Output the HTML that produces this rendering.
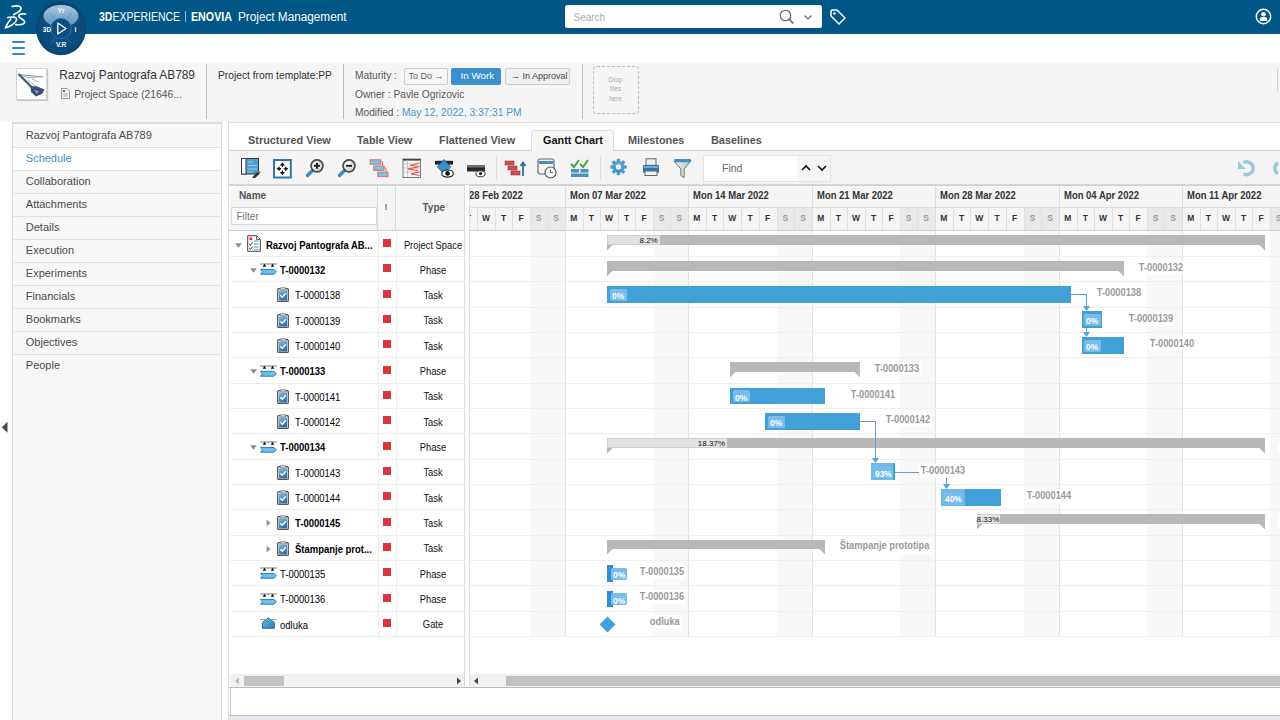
<!DOCTYPE html><html><head><meta charset="utf-8"><style>
*{margin:0;padding:0;box-sizing:border-box}
html,body{width:1280px;height:720px;overflow:hidden;background:#fff;font-family:"Liberation Sans", sans-serif;color:#333}
.ab{position:absolute}
.t{position:absolute;white-space:nowrap;line-height:1}
</style></head><body>
<div class="ab" style="left:0px;top:0px;width:1280px;height:34px;background:#005686"></div>
<svg class="ab" style="left:0px;top:0px" width="34" height="34" viewBox="0 0 34 34">
<g fill="none" stroke="#fff" stroke-linecap="round" stroke-linejoin="round">
<path d="M12.3 6.3 C16 5.6 21.3 5.4 21 8.6 C20.6 11 17 13 13.8 14.6" stroke-width="1.7"/>
<path d="M7.8 17.5 C11 16.9 17.2 16.4 16.6 19.6 C16 23 10.5 26.5 5.3 27.9 C6.8 24.5 8.8 21.2 10.8 18.9" stroke-width="1.6"/>
<path d="M25.6 14 C22 13.5 18.3 14 18.9 16.6 C19.5 18.6 25.2 19.4 24.6 22.4 C24.1 24.7 19 24.9 15.8 24.6" stroke-width="1.7"/>
</g></svg>
<svg class="ab" style="left:34px;top:0px" width="54" height="57" viewBox="0 0 54 57">
<defs>
<radialGradient id="cg" cx="50%" cy="45%" r="55%"><stop offset="0" stop-color="#0d5488"/><stop offset="1" stop-color="#0a4a79"/></radialGradient>
<linearGradient id="tg" x1="0" y1="0" x2="0" y2="1"><stop offset="0" stop-color="#a9c8e0"/><stop offset="1" stop-color="#5b8fbb"/></linearGradient>
</defs>
<ellipse cx="27" cy="28.3" rx="25" ry="27" fill="#0a4570"/>
<circle cx="27" cy="28.5" r="24" fill="url(#cg)"/>
<ellipse cx="27" cy="16" rx="17.5" ry="11" fill="url(#tg)"/>
<circle cx="27" cy="28.5" r="10.2" fill="#0b4d80"/>
<circle cx="27" cy="28.5" r="10.2" fill="none" stroke="#2a84bf" stroke-width="0.7"/>
<path d="M23.8 23 L32 28.5 L23.8 34 Z" fill="none" stroke="#fff" stroke-width="1.3" stroke-linejoin="round"/>
<g stroke="#3a8cc4" stroke-width="0.6"><line x1="16" y1="13" x2="21" y2="18"/><line x1="38" y1="13" x2="33" y2="18"/><line x1="16.5" y1="43" x2="21" y2="39"/><line x1="37.5" y1="43" x2="33" y2="39"/></g>
<text x="27" y="13" fill="#fff" font-family="Liberation Sans" font-weight="bold" font-size="6.5" text-anchor="middle">Yr</text>
<text x="13" y="31.5" fill="#fff" font-family="Liberation Sans" font-weight="bold" font-size="6.5" text-anchor="middle">3D</text>
<text x="41.5" y="31.5" fill="#fff" font-family="Liberation Sans" font-weight="bold" font-size="7" text-anchor="middle">i</text>
<text x="27" y="46.5" fill="#fff" font-family="Liberation Sans" font-weight="bold" font-size="6.5" text-anchor="middle">V.R</text>
</svg>
<div class="t" style="left:99px;top:10.64px;font-size:12px;color:#fff;transform:scaleX(0.874);transform-origin:0 0"><b>3D</b>EXPERIENCE</div>
<div class="ab" style="left:185px;top:11px;width:1px;height:11px;background:#8fb8da"></div>
<div class="t" style="left:190.5px;top:10.64px;font-size:12px;color:#fff;transform:scaleX(0.89);transform-origin:0 0"><b>ENOVIA</b></div>
<div class="t" style="left:238.2px;top:10.64px;font-size:12px;color:#fff;transform:scaleX(0.98);transform-origin:0 0">Project Management</div>
<div class="ab" style="left:565px;top:5.4px;width:257px;height:22.8px;background:#fff;border-radius:2.5px"></div>
<div class="t" style="left:573.5px;top:12.54px;font-size:10px;color:#aaa">Search</div>
<svg class="ab" style="left:778px;top:8px" width="18" height="18" viewBox="0 0 18 18"><circle cx="7.5" cy="7.5" r="5.2" fill="none" stroke="#6a6a6a" stroke-width="1.3"/><line x1="11.2" y1="11.2" x2="14.8" y2="14.8" stroke="#6a6a6a" stroke-width="1.7" stroke-linecap="round"/></svg>
<svg class="ab" style="left:802px;top:12px" width="12" height="10" viewBox="0 0 12 10"><path d="M2.5 3.5 L6 7 L9.5 3.5" fill="none" stroke="#6a6a6a" stroke-width="1.2"/></svg>
<svg class="ab" style="left:829px;top:8px" width="18" height="18" viewBox="0 0 18 18"><path d="M2 3 L2 8 L10 16 L16 10 L8 2 L3 2 Z" fill="none" stroke="#fff" stroke-width="1.5" stroke-linejoin="round"/><circle cx="5.5" cy="5.5" r="1.3" fill="#fff"/></svg>
<svg class="ab" style="left:1255px;top:8px" width="17" height="17" viewBox="0 0 17 17"><circle cx="8.5" cy="8.5" r="7.2" fill="none" stroke="#fff" stroke-width="1.4"/><circle cx="8.5" cy="6.2" r="2.3" fill="#fff"/><path d="M4.8 13 V11 C4.8 9.6 5.8 9.1 8.5 9.1 C11.2 9.1 12.2 9.6 12.2 11 V13 Z" fill="#fff"/></svg>
<div class="ab" style="left:12px;top:41px;width:13px;height:2px;background:#2f86cf;border-radius:1px"></div>
<div class="ab" style="left:12px;top:47px;width:13px;height:2px;background:#2f86cf;border-radius:1px"></div>
<div class="ab" style="left:12px;top:53px;width:13px;height:2px;background:#2f86cf;border-radius:1px"></div>
<div class="ab" style="left:0px;top:62px;width:1280px;height:60px;background:#f5f5f5"></div>
<div class="ab" style="left:15.5px;top:67.5px;width:31px;height:32px;background:#fff;border:1px solid #d4d4d4;box-shadow:1px 1px 1px #c8c8c8"></div>
<svg class="ab" style="left:16px;top:68px" width="31" height="31" viewBox="0 0 31 31"><g fill="none" stroke-linecap="round"><path d="M3 6.5 L27 9" stroke="#8a93a8" stroke-width="1"/><path d="M3.5 6.5 L12 10 L25 8.5" stroke="#9aa0b0" stroke-width="0.9"/><path d="M3 6.5 L17.5 21" stroke="#46577a" stroke-width="2.2"/><path d="M12 12 L19 18 M16 11 L22 14" stroke="#a39aa6" stroke-width="0.9"/></g><path d="M14.5 19 L20 18 L28.5 21.5 L26 26 L20 28.5 L15 24 Z" fill="#3d4c74"/><path d="M18 22 L23 23 L21 26 Z" fill="#8fa0c8"/></svg>
<div class="t" style="left:59.3px;top:69.97px;font-size:11.85px;color:#333">Razvoj Pantografa AB789</div>
<svg class="ab" style="left:61px;top:88px" width="9" height="11" viewBox="0 0 9 11"><path d="M0.5 0.5 H6 L8.5 3 V10.5 H0.5 Z" fill="#f4f4f4" stroke="#999" stroke-width="1"/><rect x="2" y="2" width="2" height="2" fill="#d33"/><line x1="2" y1="6" x2="7" y2="6" stroke="#7ab" stroke-width="0.8"/><line x1="2" y1="8" x2="7" y2="8" stroke="#7ab" stroke-width="0.8"/></svg>
<div class="t" style="left:74.2px;top:90.28px;font-size:10.3px;color:#555">Project Space (21646...</div>
<div class="ab" style="left:206px;top:64px;width:1px;height:55px;background:#bbb"></div>
<div class="t" style="left:218px;top:70.82px;font-size:10.25px;color:#333">Project from template:PP</div>
<div class="ab" style="left:342.5px;top:64px;width:1px;height:55px;background:#bbb"></div>
<div class="t" style="left:355px;top:70.67px;font-size:10.2px;color:#555">Maturity :</div>
<div class="ab" style="left:403.5px;top:67.5px;width:44px;height:17px;background:#f5f5f5;border:1px solid #ccc;border-radius:2px"></div>
<div class="t" style="left:408.5px;top:71.88px;font-size:9px;color:#666">To Do &#8594;</div>
<div class="ab" style="left:451px;top:67.5px;width:50px;height:17.5px;background:#3a8fcc;border-radius:2px"></div>
<div class="t" style="left:460.5px;top:70.70px;font-size:9.8px;color:#fff">In Work</div>
<div class="ab" style="left:505px;top:67.5px;width:65px;height:17px;background:#f0f0f0;border:1px solid #ccc;border-radius:2px"></div>
<div class="t" style="left:511px;top:71.88px;font-size:9px;color:#444">&#8594; In Approval</div>
<div class="t" style="left:355px;top:89.77px;font-size:10.2px;color:#555">Owner : Pavle Ogrizovic</div>
<div class="t" style="left:355px;top:107.57px;font-size:10.2px;color:#555">Modified : <span style="color:#4a95d0">May 12, 2022, 3:37:31 PM</span></div>
<div class="ab" style="left:581.5px;top:64px;width:1px;height:55px;background:#bbb"></div>
<div class="ab" style="left:593px;top:66px;width:45.5px;height:47.5px;border:1px dashed #bbb;border-radius:4px"></div>
<div class="ab" style="left:593px;top:75px;width:45px;text-align:center;font-size:6.5px;line-height:9.3px;color:#aaa">Drop<br>files<br>here</div>
<div class="ab" style="left:1277px;top:69px;width:1px;height:22px;background:#ccc"></div>
<div class="ab" style="left:12px;top:122px;width:210px;height:598px;background:#f7f7f7;border-left:1px solid #ddd;border-right:1px solid #ddd;border-top:2px solid #ddd"></div>
<div class="t" style="left:25.8px;top:129.99px;font-size:11px;color:#4a4a4a">Razvoj Pantografa AB789</div>
<div class="ab" style="left:13px;top:146.55px;width:208px;height:23px;background:#fff"></div>
<div class="t" style="left:25.8px;top:153.04px;font-size:11px;color:#3d8fd1">Schedule</div>
<div class="t" style="left:25.8px;top:176.09px;font-size:11px;color:#4a4a4a">Collaboration</div>
<div class="t" style="left:25.8px;top:199.14px;font-size:11px;color:#4a4a4a">Attachments</div>
<div class="t" style="left:25.8px;top:222.19px;font-size:11px;color:#4a4a4a">Details</div>
<div class="t" style="left:25.8px;top:245.24px;font-size:11px;color:#4a4a4a">Execution</div>
<div class="t" style="left:25.8px;top:268.29px;font-size:11px;color:#4a4a4a">Experiments</div>
<div class="t" style="left:25.8px;top:291.34px;font-size:11px;color:#4a4a4a">Financials</div>
<div class="t" style="left:25.8px;top:314.39px;font-size:11px;color:#4a4a4a">Bookmarks</div>
<div class="t" style="left:25.8px;top:337.44px;font-size:11px;color:#4a4a4a">Objectives</div>
<div class="t" style="left:25.8px;top:360.49px;font-size:11px;color:#4a4a4a">People</div>
<div class="ab" style="left:13px;top:146.5px;width:208px;height:1px;background:#e0e0e0"></div>
<div class="ab" style="left:13px;top:169.55px;width:208px;height:1px;background:#e0e0e0"></div>
<div class="ab" style="left:13px;top:192.6px;width:208px;height:1px;background:#e0e0e0"></div>
<div class="ab" style="left:13px;top:215.65px;width:208px;height:1px;background:#e0e0e0"></div>
<div class="ab" style="left:13px;top:238.7px;width:208px;height:1px;background:#e0e0e0"></div>
<div class="ab" style="left:13px;top:261.75px;width:208px;height:1px;background:#e0e0e0"></div>
<div class="ab" style="left:13px;top:284.8px;width:208px;height:1px;background:#e0e0e0"></div>
<div class="ab" style="left:13px;top:307.85px;width:208px;height:1px;background:#e0e0e0"></div>
<div class="ab" style="left:13px;top:330.9px;width:208px;height:1px;background:#e0e0e0"></div>
<div class="ab" style="left:13px;top:353.95000000000005px;width:208px;height:1px;background:#e0e0e0"></div>
<svg class="ab" style="left:1px;top:421px" width="8" height="13" viewBox="0 0 8 13"><path d="M6.5 0.8 L0.8 6.3 L6.5 11.8 Z" fill="#4a4a4a"/></svg>
<div class="ab" style="left:228px;top:122px;width:1052px;height:598px;background:#fff;border-left:1px solid #ddd;border-top:1px solid #ddd"></div>
<div class="ab" style="left:229px;top:150px;width:1051px;height:2px;background:#d2d2d2"></div>
<div class="ab" style="left:531px;top:130px;width:82.5px;height:21px;background:#f6f6f6;border:1px solid #ddd;border-bottom:none;border-radius:2px 2px 0 0"></div>
<div class="t" style="left:247.6px;top:134.18px;font-size:11.6px;font-weight:bold;color:#555;transform:scaleX(0.94);transform-origin:0 0">Structured View</div>
<div class="t" style="left:357px;top:134.18px;font-size:11.6px;font-weight:bold;color:#555;transform:scaleX(0.94);transform-origin:0 0">Table View</div>
<div class="t" style="left:438.7px;top:134.18px;font-size:11.6px;font-weight:bold;color:#555;transform:scaleX(0.94);transform-origin:0 0">Flattened View</div>
<div class="t" style="left:542.75px;top:134.18px;font-size:11.6px;font-weight:bold;color:#111;transform:scaleX(0.94);transform-origin:0 0">Gantt Chart</div>
<div class="t" style="left:627.7px;top:134.18px;font-size:11.6px;font-weight:bold;color:#555;transform:scaleX(0.94);transform-origin:0 0">Milestones</div>
<div class="t" style="left:711.2px;top:134.18px;font-size:11.6px;font-weight:bold;color:#555;transform:scaleX(0.94);transform-origin:0 0">Baselines</div>
<div class="ab" style="left:229px;top:151px;width:1051px;height:33.5px;background:#f4f4f4"></div>
<div class="ab" style="left:229px;top:184px;width:1051px;height:1px;background:#d6d6d6"></div>
<svg class="ab" style="left:241px;top:158px" width="20" height="20" viewBox="0 0 20 20"><rect x="0.5" y="0.5" width="17" height="15.5" fill="#4d9fcf" stroke="#3a3a3a" stroke-width="1"/><rect x="0.5" y="0.5" width="4.5" height="15.5" fill="#fff" stroke="#3a3a3a" stroke-width="1"/><g stroke="#9dd2ee" stroke-width="0.9"><line x1="6.5" y1="4" x2="12" y2="4"/><line x1="6.5" y1="7.5" x2="16" y2="7.5"/><line x1="6.5" y1="11" x2="16" y2="11"/><line x1="6.5" y1="14" x2="12" y2="14"/></g><path d="M11 19.5 L16.5 14 L18.5 16 L13 21 Z" fill="#333"/><path d="M16.5 14 L18 12.5 L19.8 14.3 L18.5 16 Z" fill="#777"/></svg>
<svg class="ab" style="left:273px;top:158.5px" width="19" height="20" viewBox="0 0 19 20"><rect x="1" y="1" width="16.8" height="17.5" fill="#fff" stroke="#2f77a8" stroke-width="2"/><g fill="#111"><path d="M9.4 3.6 L12 6.6 L6.8 6.6 Z"/><path d="M9.4 15.9 L12 12.9 L6.8 12.9 Z"/><path d="M3.6 9.75 L6.6 7.2 L6.6 12.3 Z"/><path d="M15.2 9.75 L12.2 7.2 L12.2 12.3 Z"/></g><g stroke="#111" stroke-width="1.3"><line x1="9.4" y1="6" x2="9.4" y2="8"/><line x1="9.4" y1="11.5" x2="9.4" y2="13.5"/><line x1="6" y1="9.75" x2="8" y2="9.75"/><line x1="10.8" y1="9.75" x2="12.8" y2="9.75"/></g></svg>
<svg class="ab" style="left:305px;top:158px" width="20" height="20" viewBox="0 0 20 20"><defs><radialGradient id="lg" cx="40%" cy="35%" r="70%"><stop offset="0" stop-color="#fff"/><stop offset="1" stop-color="#c9c9c9"/></radialGradient></defs><path d="M8 12 L2.5 17.5" stroke="#3d86b8" stroke-width="3.2" stroke-linecap="round"/><circle cx="12" cy="7.8" r="6" fill="url(#lg)" stroke="#4b4b4b" stroke-width="1.7"/><path d="M12 4.8 V10.8 M9 7.8 H15" stroke="#222" stroke-width="2"/></svg>
<svg class="ab" style="left:337px;top:158px" width="20" height="20" viewBox="0 0 20 20"><path d="M8 12 L2.5 17.5" stroke="#3d86b8" stroke-width="3.2" stroke-linecap="round"/><circle cx="12" cy="7.8" r="6" fill="url(#lg)" stroke="#4b4b4b" stroke-width="1.7"/><path d="M9 7.8 H15" stroke="#222" stroke-width="2"/></svg>
<svg class="ab" style="left:369px;top:158px" width="21" height="20" viewBox="0 0 21 20"><g fill="#74c6f0" stroke="#e0776a" stroke-width="1.1"><rect x="1.2" y="1.8" width="10.3" height="4.4"/><rect x="4.7" y="8" width="10.3" height="4.4"/><rect x="8.7" y="14.2" width="10.3" height="4.4"/></g><path d="M11.5 3.5 H13.5 V8 M15 10 H17 V14.2" fill="none" stroke="#e0776a" stroke-width="1"/></svg>
<svg class="ab" style="left:402px;top:158px" width="20" height="21" viewBox="0 0 20 21"><rect x="1" y="1" width="17.5" height="18.5" fill="#f6f6f6" stroke="#777" stroke-width="1"/><rect x="1" y="1" width="17.5" height="1.6" fill="#444"/><g stroke="#bbb" stroke-width="0.8"><line x1="1" y1="6" x2="18.5" y2="6"/><line x1="1" y1="10" x2="18.5" y2="10"/><line x1="1" y1="14" x2="18.5" y2="14"/><line x1="5.5" y1="2" x2="5.5" y2="19"/></g><g fill="none" stroke="#f03a2a" stroke-width="0.9"><path d="M17.5 5 L8 7.5 L17.5 8.5"/><path d="M16 9 L6 11 L16 12.5"/><path d="M17.5 14 L9 16 L17.5 17.5"/></g></svg>
<svg class="ab" style="left:434px;top:158px" width="20" height="21" viewBox="0 0 20 21"><rect x="1" y="2.8" width="18" height="3.8" fill="#222"/><path d="M10 1.5 L16.8 8.8 L10 16 L3.2 8.8 Z" fill="#3a90c8" stroke="#23628f" stroke-width="0.8"/><ellipse cx="13.6" cy="15.6" rx="5.8" ry="3.6" fill="#fff" stroke="#222" stroke-width="1.2"/><circle cx="13.6" cy="15.4" r="2.3" fill="#111"/></svg>
<svg class="ab" style="left:466px;top:158px" width="20" height="21" viewBox="0 0 20 21"><rect x="1" y="7" width="18" height="6.5" fill="#2a2a2a"/><rect x="1" y="7" width="18" height="2.5" fill="#707070"/><ellipse cx="14.5" cy="15.8" rx="4.6" ry="3" fill="#fff" stroke="#333" stroke-width="1"/><circle cx="14.5" cy="15.6" r="1.6" fill="#222"/></svg>
<div class="ab" style="left:495.5px;top:156px;width:1px;height:24px;background:#ddd"></div>
<svg class="ab" style="left:504px;top:158px" width="22" height="20" viewBox="0 0 22 20"><g fill="#d64a55" stroke="#7a2a30" stroke-width="0.5"><rect x="1" y="3" width="9" height="4"/><rect x="4" y="8" width="9" height="4"/><rect x="7" y="13" width="9" height="4"/></g><path d="M19 18 V5 M16.5 8 L19 4.5 L21.5 8" fill="none" stroke="#2d6ea3" stroke-width="1.8"/></svg>
<svg class="ab" style="left:537px;top:158px" width="20" height="21" viewBox="0 0 20 21"><rect x="1" y="1" width="16" height="15" rx="2" fill="#f4f4f4" stroke="#666" stroke-width="1.2"/><rect x="2" y="3" width="14" height="3" fill="#4a8fc0"/><circle cx="13.5" cy="14.5" r="5.5" fill="#fff" stroke="#555" stroke-width="1.2"/><path d="M13.5 11.5 V14.5 H16" fill="none" stroke="#555" stroke-width="1"/></svg>
<svg class="ab" style="left:570px;top:158px" width="20" height="20" viewBox="0 0 20 20"><path d="M1 6 L4 9 L9 2 M10 6 L13 9 L18 2" fill="none" stroke="#3aa83a" stroke-width="2"/><rect x="1" y="11" width="8" height="3.5" fill="#4a8fc0"/><rect x="10.5" y="11" width="8" height="3.5" fill="#4a8fc0"/><rect x="1" y="15.5" width="17.5" height="3.5" fill="#4a8fc0"/></svg>
<div class="ab" style="left:599.5px;top:156px;width:1px;height:24px;background:#ddd"></div>
<svg class="ab" style="left:610px;top:158px" width="17" height="18" viewBox="0 0 17 18"><defs><linearGradient id="gr" x1="0" y1="0" x2="0" y2="1"><stop offset="0" stop-color="#6fb3e0"/><stop offset="1" stop-color="#3a86bd"/></linearGradient></defs><g transform="translate(8.5,9)"><circle r="6" fill="url(#gr)"/><rect x="-1.7" y="-8.2" width="3.4" height="3.8" rx="0.6" fill="#4e9acd" transform="rotate(0)"/><rect x="-1.7" y="-8.2" width="3.4" height="3.8" rx="0.6" fill="#4e9acd" transform="rotate(45)"/><rect x="-1.7" y="-8.2" width="3.4" height="3.8" rx="0.6" fill="#4e9acd" transform="rotate(90)"/><rect x="-1.7" y="-8.2" width="3.4" height="3.8" rx="0.6" fill="#4e9acd" transform="rotate(135)"/><rect x="-1.7" y="-8.2" width="3.4" height="3.8" rx="0.6" fill="#4e9acd" transform="rotate(180)"/><rect x="-1.7" y="-8.2" width="3.4" height="3.8" rx="0.6" fill="#4e9acd" transform="rotate(225)"/><rect x="-1.7" y="-8.2" width="3.4" height="3.8" rx="0.6" fill="#4e9acd" transform="rotate(270)"/><rect x="-1.7" y="-8.2" width="3.4" height="3.8" rx="0.6" fill="#4e9acd" transform="rotate(315)"/><circle r="2.7" fill="#f4f4f4"/></g></svg>
<svg class="ab" style="left:642px;top:158px" width="18" height="20" viewBox="0 0 18 20"><rect x="4" y="0.8" width="10" height="6.5" fill="#f2f2f2" stroke="#666" stroke-width="1"/><rect x="1" y="7" width="16" height="8" rx="1.2" fill="#2f78ab"/><rect x="2" y="8" width="14" height="2" fill="#65aedb"/><rect x="3" y="13" width="12" height="4.5" fill="#f2f2f2" stroke="#666" stroke-width="1"/></svg>
<svg class="ab" style="left:673px;top:158px" width="19" height="21" viewBox="0 0 19 21"><defs><linearGradient id="fg" x1="0" y1="0" x2="1" y2="0"><stop offset="0" stop-color="#f4f4f4"/><stop offset="1" stop-color="#bcbcbc"/></linearGradient></defs><path d="M1.2 3 H17.8 L11.2 11 V19.5 L7.8 17.5 V11 Z" fill="url(#fg)" stroke="#777" stroke-width="1"/><rect x="1" y="1" width="17" height="3.2" rx="1" fill="#3a8fcc"/></svg>
<div class="ab" style="left:703px;top:155px;width:127.5px;height:26.5px;background:#fff;border:1px solid #e3e3e3"></div>
<div class="ab" style="left:797px;top:156px;width:32.5px;height:24.5px;background:#f6f6f6"></div>
<div class="t" style="left:722px;top:163.11px;font-size:10.5px;color:#666">Find</div>
<svg class="ab" style="left:800px;top:163px" width="12" height="10" viewBox="0 0 12 10"><path d="M2 7 L6 3 L10 7" fill="none" stroke="#111" stroke-width="1.6"/></svg>
<svg class="ab" style="left:815.5px;top:163px" width="12" height="10" viewBox="0 0 12 10"><path d="M2 3 L6 7 L10 3" fill="none" stroke="#111" stroke-width="1.6"/></svg>
<svg class="ab" style="left:1236px;top:158px" width="22" height="22" viewBox="0 0 22 22"><path d="M7.5 4.8 A6.4 6.4 0 1 1 7.5 15.8" fill="none" stroke="#9dc6df" stroke-width="3.6"/><path d="M2 2.8 V10.9 H9.8 Z" fill="#9dc6df"/></svg>
<svg class="ab" style="left:1266px;top:158px" width="14" height="22" viewBox="0 0 14 22"><path d="M12 4.8 A6.4 6.4 0 0 0 12 15.8" fill="none" stroke="#9dc6df" stroke-width="3.6"/></svg>
<div class="ab" style="left:230px;top:184.5px;width:234.5px;height:46.0px;background:#f5f5f5"></div>
<div class="ab" style="left:229px;top:184.5px;width:235.5px;height:1px;background:#d0d0d0"></div>
<div class="ab" style="left:229px;top:229.5px;width:235.5px;height:1.5px;background:#d0d0d0"></div>
<div class="ab" style="left:377px;top:184.5px;width:1px;height:46.0px;background:#d6d6d6"></div>
<div class="ab" style="left:395.3px;top:184.5px;width:1px;height:46.0px;background:#d6d6d6"></div>
<div class="ab" style="left:464px;top:184.5px;width:1px;height:502.5px;background:#dcdcdc"></div>
<div class="ab" style="left:469px;top:184.5px;width:1px;height:502.5px;background:#dcdcdc"></div>
<div class="t" style="left:238.9px;top:191.44px;font-size:10px;font-weight:bold;color:#555">Name</div>
<div class="ab" style="left:231px;top:207px;width:146px;height:17.5px;background:#fff;border:1px solid #d8d8d8"></div>
<div class="t" style="left:236.5px;top:211.73px;font-size:10px;color:#777">Filter</div>
<div class="t" style="left:384.5px;top:202.88px;font-size:9px;font-weight:bold;color:#777">!</div>
<div class="t" style="left:422.5px;top:203.03px;font-size:10px;font-weight:bold;color:#555">Type</div>
<div class="ab" style="left:230px;top:256.0px;width:234px;height:1px;background:#ededed"></div>
<svg class="ab" style="left:234.89999999999998px;top:242.565px" width="7" height="5" viewBox="0 0 7 5"><path d="M0.2 0.3 H6.8 L3.5 4.7 Z" fill="#8a8a8a"/></svg>
<svg class="ab" style="left:247px;top:234.665px" width="14" height="17" viewBox="0 0 14 17"><path d="M0.7 0.7 H9.5 L13.3 4.5 V16.3 H0.7 Z" fill="#fff" stroke="#444" stroke-width="1"/><path d="M9.5 0.7 V4.5 H13.3" fill="none" stroke="#444" stroke-width="0.8"/><path d="M2.5 2.5 L5 5 M5 2.5 L2.5 5" stroke="#e22" stroke-width="1.2"/><path d="M2.3 9 L3.5 10.5 L5.5 7.5 M2.3 13 L3.5 14.5 L5.5 11.5" fill="none" stroke="#333" stroke-width="0.9"/><g stroke="#4a9fd8" stroke-width="1"><line x1="7" y1="9" x2="11.5" y2="9"/><line x1="7" y1="12" x2="11.5" y2="12"/><line x1="7" y1="14.8" x2="11.5" y2="14.8"/><line x1="7" y1="6" x2="11.5" y2="6"/></g></svg>
<div class="t" style="left:265.6px;top:240.83px;font-size:10.2px;color:#000;transform:scaleX(0.93);transform-origin:0 0;font-weight:bold">Razvoj Pantografa AB...</div>
<div class="ab" style="left:383px;top:239.165px;width:8px;height:8px;background:#d9363e"></div>
<div class="t" style="left:399px;width:68px;text-align:center;top:240.50px;font-size:10px;color:#111;transform:scaleX(0.935)">Project Space</div>
<div class="ab" style="left:230px;top:281.3333333333333px;width:234px;height:1px;background:#ededed"></div>
<svg class="ab" style="left:249.5px;top:267.895px" width="7" height="5" viewBox="0 0 7 5"><path d="M0.2 0.3 H6.8 L3.5 4.7 Z" fill="#8a8a8a"/></svg>
<svg class="ab" style="left:260.3px;top:263.495px" width="17" height="12" viewBox="0 0 17 12"><path d="M0.3 1 H16.7" stroke="#666" stroke-width="0.9"/><path d="M4.5 0.8 L6.3 3.8 H2.7 Z M12.5 0.8 L14.3 3.8 H10.7 Z" fill="#111"/><path d="M0.5 6.4 H14 L16.4 8.8 L14 11.2 H0.5 L2.5 8.8 Z" fill="#6cc0ec" stroke="#1d6fa5" stroke-width="0.9"/></svg>
<div class="t" style="left:279.9px;top:266.16px;font-size:10.2px;color:#000;transform:scaleX(0.93);transform-origin:0 0;font-weight:bold">T-0000132</div>
<div class="ab" style="left:383px;top:264.495px;width:8px;height:8px;background:#d9363e"></div>
<div class="t" style="left:399px;width:68px;text-align:center;top:265.83px;font-size:10px;color:#111;transform:scaleX(0.935)">Phase</div>
<div class="ab" style="left:230px;top:306.6666666666667px;width:234px;height:1px;background:#ededed"></div>
<svg class="ab" style="left:277.1px;top:287.325px" width="12" height="15" viewBox="0 0 12 15"><defs><linearGradient id="tkg" x1="0" y1="0" x2="0.3" y2="1"><stop offset="0" stop-color="#7bbbe4"/><stop offset="1" stop-color="#2f73a6"/></linearGradient></defs><rect x="0.6" y="1.6" width="10.8" height="12.8" rx="1" fill="#cfd6dc" stroke="#555" stroke-width="1.1"/><rect x="2" y="3.5" width="8" height="9.8" fill="url(#tkg)"/><rect x="3.5" y="0.4" width="5" height="2.6" rx="0.5" fill="#c8c8c8" stroke="#777" stroke-width="0.6"/><path d="M3.3 8.3 L5.3 10.3 L8.8 6.3" fill="none" stroke="#fff" stroke-width="1.3"/></svg>
<div class="t" style="left:295px;top:291.49px;font-size:10.2px;color:#000;transform:scaleX(0.93);transform-origin:0 0;">T-0000138</div>
<div class="ab" style="left:383px;top:289.825px;width:8px;height:8px;background:#d9363e"></div>
<div class="t" style="left:399px;width:68px;text-align:center;top:291.16px;font-size:10px;color:#111;transform:scaleX(0.935)">Task</div>
<div class="ab" style="left:230px;top:332.0px;width:234px;height:1px;background:#ededed"></div>
<svg class="ab" style="left:277.1px;top:312.65500000000003px" width="12" height="15" viewBox="0 0 12 15"><defs><linearGradient id="tkg" x1="0" y1="0" x2="0.3" y2="1"><stop offset="0" stop-color="#7bbbe4"/><stop offset="1" stop-color="#2f73a6"/></linearGradient></defs><rect x="0.6" y="1.6" width="10.8" height="12.8" rx="1" fill="#cfd6dc" stroke="#555" stroke-width="1.1"/><rect x="2" y="3.5" width="8" height="9.8" fill="url(#tkg)"/><rect x="3.5" y="0.4" width="5" height="2.6" rx="0.5" fill="#c8c8c8" stroke="#777" stroke-width="0.6"/><path d="M3.3 8.3 L5.3 10.3 L8.8 6.3" fill="none" stroke="#fff" stroke-width="1.3"/></svg>
<div class="t" style="left:295px;top:316.82px;font-size:10.2px;color:#000;transform:scaleX(0.93);transform-origin:0 0;">T-0000139</div>
<div class="ab" style="left:383px;top:315.15500000000003px;width:8px;height:8px;background:#d9363e"></div>
<div class="t" style="left:399px;width:68px;text-align:center;top:316.49px;font-size:10px;color:#111;transform:scaleX(0.935)">Task</div>
<div class="ab" style="left:230px;top:357.3333333333333px;width:234px;height:1px;background:#ededed"></div>
<svg class="ab" style="left:277.1px;top:337.985px" width="12" height="15" viewBox="0 0 12 15"><defs><linearGradient id="tkg" x1="0" y1="0" x2="0.3" y2="1"><stop offset="0" stop-color="#7bbbe4"/><stop offset="1" stop-color="#2f73a6"/></linearGradient></defs><rect x="0.6" y="1.6" width="10.8" height="12.8" rx="1" fill="#cfd6dc" stroke="#555" stroke-width="1.1"/><rect x="2" y="3.5" width="8" height="9.8" fill="url(#tkg)"/><rect x="3.5" y="0.4" width="5" height="2.6" rx="0.5" fill="#c8c8c8" stroke="#777" stroke-width="0.6"/><path d="M3.3 8.3 L5.3 10.3 L8.8 6.3" fill="none" stroke="#fff" stroke-width="1.3"/></svg>
<div class="t" style="left:295px;top:342.15px;font-size:10.2px;color:#000;transform:scaleX(0.93);transform-origin:0 0;">T-0000140</div>
<div class="ab" style="left:383px;top:340.485px;width:8px;height:8px;background:#d9363e"></div>
<div class="t" style="left:399px;width:68px;text-align:center;top:341.82px;font-size:10px;color:#111;transform:scaleX(0.935)">Task</div>
<div class="ab" style="left:230px;top:382.6666666666667px;width:234px;height:1px;background:#ededed"></div>
<svg class="ab" style="left:249.5px;top:369.215px" width="7" height="5" viewBox="0 0 7 5"><path d="M0.2 0.3 H6.8 L3.5 4.7 Z" fill="#8a8a8a"/></svg>
<svg class="ab" style="left:260.3px;top:364.815px" width="17" height="12" viewBox="0 0 17 12"><path d="M0.3 1 H16.7" stroke="#666" stroke-width="0.9"/><path d="M4.5 0.8 L6.3 3.8 H2.7 Z M12.5 0.8 L14.3 3.8 H10.7 Z" fill="#111"/><path d="M0.5 6.4 H14 L16.4 8.8 L14 11.2 H0.5 L2.5 8.8 Z" fill="#6cc0ec" stroke="#1d6fa5" stroke-width="0.9"/></svg>
<div class="t" style="left:279.9px;top:367.48px;font-size:10.2px;color:#000;transform:scaleX(0.93);transform-origin:0 0;font-weight:bold">T-0000133</div>
<div class="ab" style="left:383px;top:365.815px;width:8px;height:8px;background:#d9363e"></div>
<div class="t" style="left:399px;width:68px;text-align:center;top:367.15px;font-size:10px;color:#111;transform:scaleX(0.935)">Phase</div>
<div class="ab" style="left:230px;top:408.0px;width:234px;height:1px;background:#ededed"></div>
<svg class="ab" style="left:277.1px;top:388.64500000000004px" width="12" height="15" viewBox="0 0 12 15"><defs><linearGradient id="tkg" x1="0" y1="0" x2="0.3" y2="1"><stop offset="0" stop-color="#7bbbe4"/><stop offset="1" stop-color="#2f73a6"/></linearGradient></defs><rect x="0.6" y="1.6" width="10.8" height="12.8" rx="1" fill="#cfd6dc" stroke="#555" stroke-width="1.1"/><rect x="2" y="3.5" width="8" height="9.8" fill="url(#tkg)"/><rect x="3.5" y="0.4" width="5" height="2.6" rx="0.5" fill="#c8c8c8" stroke="#777" stroke-width="0.6"/><path d="M3.3 8.3 L5.3 10.3 L8.8 6.3" fill="none" stroke="#fff" stroke-width="1.3"/></svg>
<div class="t" style="left:295px;top:392.81px;font-size:10.2px;color:#000;transform:scaleX(0.93);transform-origin:0 0;">T-0000141</div>
<div class="ab" style="left:383px;top:391.14500000000004px;width:8px;height:8px;background:#d9363e"></div>
<div class="t" style="left:399px;width:68px;text-align:center;top:392.48px;font-size:10px;color:#111;transform:scaleX(0.935)">Task</div>
<div class="ab" style="left:230px;top:433.33333333333337px;width:234px;height:1px;background:#ededed"></div>
<svg class="ab" style="left:277.1px;top:413.975px" width="12" height="15" viewBox="0 0 12 15"><defs><linearGradient id="tkg" x1="0" y1="0" x2="0.3" y2="1"><stop offset="0" stop-color="#7bbbe4"/><stop offset="1" stop-color="#2f73a6"/></linearGradient></defs><rect x="0.6" y="1.6" width="10.8" height="12.8" rx="1" fill="#cfd6dc" stroke="#555" stroke-width="1.1"/><rect x="2" y="3.5" width="8" height="9.8" fill="url(#tkg)"/><rect x="3.5" y="0.4" width="5" height="2.6" rx="0.5" fill="#c8c8c8" stroke="#777" stroke-width="0.6"/><path d="M3.3 8.3 L5.3 10.3 L8.8 6.3" fill="none" stroke="#fff" stroke-width="1.3"/></svg>
<div class="t" style="left:295px;top:418.14px;font-size:10.2px;color:#000;transform:scaleX(0.93);transform-origin:0 0;">T-0000142</div>
<div class="ab" style="left:383px;top:416.475px;width:8px;height:8px;background:#d9363e"></div>
<div class="t" style="left:399px;width:68px;text-align:center;top:417.81px;font-size:10px;color:#111;transform:scaleX(0.935)">Task</div>
<div class="ab" style="left:230px;top:458.66666666666663px;width:234px;height:1px;background:#ededed"></div>
<svg class="ab" style="left:249.5px;top:445.205px" width="7" height="5" viewBox="0 0 7 5"><path d="M0.2 0.3 H6.8 L3.5 4.7 Z" fill="#8a8a8a"/></svg>
<svg class="ab" style="left:260.3px;top:440.805px" width="17" height="12" viewBox="0 0 17 12"><path d="M0.3 1 H16.7" stroke="#666" stroke-width="0.9"/><path d="M4.5 0.8 L6.3 3.8 H2.7 Z M12.5 0.8 L14.3 3.8 H10.7 Z" fill="#111"/><path d="M0.5 6.4 H14 L16.4 8.8 L14 11.2 H0.5 L2.5 8.8 Z" fill="#6cc0ec" stroke="#1d6fa5" stroke-width="0.9"/></svg>
<div class="t" style="left:279.9px;top:443.47px;font-size:10.2px;color:#000;transform:scaleX(0.93);transform-origin:0 0;font-weight:bold">T-0000134</div>
<div class="ab" style="left:383px;top:441.805px;width:8px;height:8px;background:#d9363e"></div>
<div class="t" style="left:399px;width:68px;text-align:center;top:443.14px;font-size:10px;color:#111;transform:scaleX(0.935)">Phase</div>
<div class="ab" style="left:230px;top:484.0px;width:234px;height:1px;background:#ededed"></div>
<svg class="ab" style="left:277.1px;top:464.635px" width="12" height="15" viewBox="0 0 12 15"><defs><linearGradient id="tkg" x1="0" y1="0" x2="0.3" y2="1"><stop offset="0" stop-color="#7bbbe4"/><stop offset="1" stop-color="#2f73a6"/></linearGradient></defs><rect x="0.6" y="1.6" width="10.8" height="12.8" rx="1" fill="#cfd6dc" stroke="#555" stroke-width="1.1"/><rect x="2" y="3.5" width="8" height="9.8" fill="url(#tkg)"/><rect x="3.5" y="0.4" width="5" height="2.6" rx="0.5" fill="#c8c8c8" stroke="#777" stroke-width="0.6"/><path d="M3.3 8.3 L5.3 10.3 L8.8 6.3" fill="none" stroke="#fff" stroke-width="1.3"/></svg>
<div class="t" style="left:295px;top:468.80px;font-size:10.2px;color:#000;transform:scaleX(0.93);transform-origin:0 0;">T-0000143</div>
<div class="ab" style="left:383px;top:467.135px;width:8px;height:8px;background:#d9363e"></div>
<div class="t" style="left:399px;width:68px;text-align:center;top:468.47px;font-size:10px;color:#111;transform:scaleX(0.935)">Task</div>
<div class="ab" style="left:230px;top:509.33333333333337px;width:234px;height:1px;background:#ededed"></div>
<svg class="ab" style="left:277.1px;top:489.965px" width="12" height="15" viewBox="0 0 12 15"><defs><linearGradient id="tkg" x1="0" y1="0" x2="0.3" y2="1"><stop offset="0" stop-color="#7bbbe4"/><stop offset="1" stop-color="#2f73a6"/></linearGradient></defs><rect x="0.6" y="1.6" width="10.8" height="12.8" rx="1" fill="#cfd6dc" stroke="#555" stroke-width="1.1"/><rect x="2" y="3.5" width="8" height="9.8" fill="url(#tkg)"/><rect x="3.5" y="0.4" width="5" height="2.6" rx="0.5" fill="#c8c8c8" stroke="#777" stroke-width="0.6"/><path d="M3.3 8.3 L5.3 10.3 L8.8 6.3" fill="none" stroke="#fff" stroke-width="1.3"/></svg>
<div class="t" style="left:295px;top:494.13px;font-size:10.2px;color:#000;transform:scaleX(0.93);transform-origin:0 0;">T-0000144</div>
<div class="ab" style="left:383px;top:492.465px;width:8px;height:8px;background:#d9363e"></div>
<div class="t" style="left:399px;width:68px;text-align:center;top:493.80px;font-size:10px;color:#111;transform:scaleX(0.935)">Task</div>
<div class="ab" style="left:230px;top:534.6666666666667px;width:234px;height:1px;background:#ededed"></div>
<svg class="ab" style="left:265.5px;top:519.295px" width="5" height="8" viewBox="0 0 5 8"><path d="M0.5 0.5 V7.5 L4.6 4 Z" fill="#999"/></svg>
<svg class="ab" style="left:277.1px;top:515.295px" width="12" height="15" viewBox="0 0 12 15"><defs><linearGradient id="tkg" x1="0" y1="0" x2="0.3" y2="1"><stop offset="0" stop-color="#7bbbe4"/><stop offset="1" stop-color="#2f73a6"/></linearGradient></defs><rect x="0.6" y="1.6" width="10.8" height="12.8" rx="1" fill="#cfd6dc" stroke="#555" stroke-width="1.1"/><rect x="2" y="3.5" width="8" height="9.8" fill="url(#tkg)"/><rect x="3.5" y="0.4" width="5" height="2.6" rx="0.5" fill="#c8c8c8" stroke="#777" stroke-width="0.6"/><path d="M3.3 8.3 L5.3 10.3 L8.8 6.3" fill="none" stroke="#fff" stroke-width="1.3"/></svg>
<div class="t" style="left:295px;top:519.46px;font-size:10.2px;color:#000;transform:scaleX(0.93);transform-origin:0 0;font-weight:bold">T-0000145</div>
<div class="ab" style="left:383px;top:517.795px;width:8px;height:8px;background:#d9363e"></div>
<div class="t" style="left:399px;width:68px;text-align:center;top:519.13px;font-size:10px;color:#111;transform:scaleX(0.935)">Task</div>
<div class="ab" style="left:230px;top:560.0px;width:234px;height:1px;background:#ededed"></div>
<svg class="ab" style="left:265.5px;top:544.625px" width="5" height="8" viewBox="0 0 5 8"><path d="M0.5 0.5 V7.5 L4.6 4 Z" fill="#999"/></svg>
<svg class="ab" style="left:277.1px;top:540.625px" width="12" height="15" viewBox="0 0 12 15"><defs><linearGradient id="tkg" x1="0" y1="0" x2="0.3" y2="1"><stop offset="0" stop-color="#7bbbe4"/><stop offset="1" stop-color="#2f73a6"/></linearGradient></defs><rect x="0.6" y="1.6" width="10.8" height="12.8" rx="1" fill="#cfd6dc" stroke="#555" stroke-width="1.1"/><rect x="2" y="3.5" width="8" height="9.8" fill="url(#tkg)"/><rect x="3.5" y="0.4" width="5" height="2.6" rx="0.5" fill="#c8c8c8" stroke="#777" stroke-width="0.6"/><path d="M3.3 8.3 L5.3 10.3 L8.8 6.3" fill="none" stroke="#fff" stroke-width="1.3"/></svg>
<div class="t" style="left:295px;top:544.79px;font-size:10.2px;color:#000;transform:scaleX(0.93);transform-origin:0 0;font-weight:bold">&#352;tampanje prot...</div>
<div class="ab" style="left:383px;top:543.125px;width:8px;height:8px;background:#d9363e"></div>
<div class="t" style="left:399px;width:68px;text-align:center;top:544.46px;font-size:10px;color:#111;transform:scaleX(0.935)">Task</div>
<div class="ab" style="left:230px;top:585.3333333333333px;width:234px;height:1px;background:#ededed"></div>
<svg class="ab" style="left:260.3px;top:567.4549999999999px" width="17" height="12" viewBox="0 0 17 12"><path d="M0.3 1 H16.7" stroke="#666" stroke-width="0.9"/><path d="M4.5 0.8 L6.3 3.8 H2.7 Z M12.5 0.8 L14.3 3.8 H10.7 Z" fill="#111"/><path d="M0.5 6.4 H14 L16.4 8.8 L14 11.2 H0.5 L2.5 8.8 Z" fill="#6cc0ec" stroke="#1d6fa5" stroke-width="0.9"/></svg>
<div class="t" style="left:279.6px;top:570.12px;font-size:10.2px;color:#000;transform:scaleX(0.93);transform-origin:0 0;">T-0000135</div>
<div class="ab" style="left:383px;top:568.4549999999999px;width:8px;height:8px;background:#d9363e"></div>
<div class="t" style="left:399px;width:68px;text-align:center;top:569.79px;font-size:10px;color:#111;transform:scaleX(0.935)">Phase</div>
<div class="ab" style="left:230px;top:610.6666666666667px;width:234px;height:1px;background:#ededed"></div>
<svg class="ab" style="left:260.3px;top:592.785px" width="17" height="12" viewBox="0 0 17 12"><path d="M0.3 1 H16.7" stroke="#666" stroke-width="0.9"/><path d="M4.5 0.8 L6.3 3.8 H2.7 Z M12.5 0.8 L14.3 3.8 H10.7 Z" fill="#111"/><path d="M0.5 6.4 H14 L16.4 8.8 L14 11.2 H0.5 L2.5 8.8 Z" fill="#6cc0ec" stroke="#1d6fa5" stroke-width="0.9"/></svg>
<div class="t" style="left:279.6px;top:595.45px;font-size:10.2px;color:#000;transform:scaleX(0.93);transform-origin:0 0;">T-0000136</div>
<div class="ab" style="left:383px;top:593.785px;width:8px;height:8px;background:#d9363e"></div>
<div class="t" style="left:399px;width:68px;text-align:center;top:595.12px;font-size:10px;color:#111;transform:scaleX(0.935)">Phase</div>
<div class="ab" style="left:230px;top:636.0px;width:234px;height:1px;background:#ededed"></div>
<svg class="ab" style="left:260.3px;top:617.115px" width="17" height="12" viewBox="0 0 17 12"><path d="M0.3 2.6 H5.2 M11.5 2.6 H16.3" stroke="#8a8a8a" stroke-width="0.9"/><defs><linearGradient id="gg" x1="0" y1="0" x2="1" y2="1"><stop offset="0" stop-color="#6ab8e8"/><stop offset="1" stop-color="#2c7bb4"/></linearGradient></defs><path d="M2.4 11.3 V5.4 L8.35 0.9 L14.3 5.4 V11.3 Z" fill="url(#gg)" stroke="#1d5f8f" stroke-width="0.9" stroke-linejoin="round"/></svg>
<div class="t" style="left:279.6px;top:620.78px;font-size:10.2px;color:#000;transform:scaleX(0.93);transform-origin:0 0;">odluka</div>
<div class="ab" style="left:383px;top:619.115px;width:8px;height:8px;background:#d9363e"></div>
<div class="t" style="left:399px;width:68px;text-align:center;top:620.45px;font-size:10px;color:#111;transform:scaleX(0.935)">Gate</div>
<div class="ab" style="left:378px;top:230.5px;width:1px;height:405.28px;background:#ececec"></div>
<div class="ab" style="left:396px;top:230.5px;width:1px;height:405.28px;background:#ececec"></div>
<div class="ab" style="left:469.5px;top:184.5px;width:810.5px;height:489.5px;overflow:hidden">
<div class="ab" style="left:0.00px;top:0.00px;width:810.50px;height:46.00px;background:#f5f5f5"></div>
<div class="ab" style="left:0.00px;top:0.00px;width:810.50px;height:1.00px;background:#d0d0d0"></div>
<div class="ab" style="left:0.00px;top:22.50px;width:810.50px;height:1.00px;background:#dedede"></div>
<div class="ab" style="left:0.00px;top:45.00px;width:810.50px;height:1.50px;background:#d0d0d0"></div>
<div class="ab" style="left:60.36px;top:23.50px;width:35.14px;height:21.50px;background:#e9e9e9"></div>
<div class="ab" style="left:60.36px;top:46.00px;width:35.14px;height:405.50px;background:#f8f8f8"></div>
<div class="ab" style="left:-27.50px;top:1.00px;width:1.00px;height:46.00px;background:#dcdcdc"></div>
<div class="ab" style="left:-27.50px;top:46.00px;width:1.00px;height:405.50px;background:#e2e2e2"></div>
<div class="t" style="left:-22.50px;top:6.78px;font-size:10.3px;font-weight:bold;color:#333;transform:scaleX(0.92);transform-origin:0 0">Mon 28 Feb 2022</div>
<div class="t" style="left:-27.50px;width:17.57px;text-align:center;top:29.60px;font-size:8.5px;font-weight:bold;color:#333">M</div>
<div class="ab" style="left:-9.93px;top:23.50px;width:1.00px;height:21.50px;background:#e0e0e0"></div>
<div class="t" style="left:-9.93px;width:17.57px;text-align:center;top:29.60px;font-size:8.5px;font-weight:bold;color:#333">T</div>
<div class="ab" style="left:7.64px;top:23.50px;width:1.00px;height:21.50px;background:#e0e0e0"></div>
<div class="t" style="left:7.64px;width:17.57px;text-align:center;top:29.60px;font-size:8.5px;font-weight:bold;color:#333">W</div>
<div class="ab" style="left:25.21px;top:23.50px;width:1.00px;height:21.50px;background:#e0e0e0"></div>
<div class="t" style="left:25.21px;width:17.57px;text-align:center;top:29.60px;font-size:8.5px;font-weight:bold;color:#333">T</div>
<div class="ab" style="left:42.79px;top:23.50px;width:1.00px;height:21.50px;background:#e0e0e0"></div>
<div class="t" style="left:42.79px;width:17.57px;text-align:center;top:29.60px;font-size:8.5px;font-weight:bold;color:#333">F</div>
<div class="ab" style="left:60.36px;top:23.50px;width:1.00px;height:21.50px;background:#e0e0e0"></div>
<div class="t" style="left:60.36px;width:17.57px;text-align:center;top:29.60px;font-size:8.5px;font-weight:bold;color:#999">S</div>
<div class="ab" style="left:77.93px;top:23.50px;width:1.00px;height:21.50px;background:#e0e0e0"></div>
<div class="t" style="left:77.93px;width:17.57px;text-align:center;top:29.60px;font-size:8.5px;font-weight:bold;color:#999">S</div>
<div class="ab" style="left:183.36px;top:23.50px;width:35.14px;height:21.50px;background:#e9e9e9"></div>
<div class="ab" style="left:183.36px;top:46.00px;width:35.14px;height:405.50px;background:#f8f8f8"></div>
<div class="ab" style="left:95.50px;top:1.00px;width:1.00px;height:46.00px;background:#dcdcdc"></div>
<div class="ab" style="left:95.50px;top:46.00px;width:1.00px;height:405.50px;background:#e2e2e2"></div>
<div class="t" style="left:100.50px;top:6.78px;font-size:10.3px;font-weight:bold;color:#333;transform:scaleX(0.92);transform-origin:0 0">Mon 07 Mar 2022</div>
<div class="t" style="left:95.50px;width:17.57px;text-align:center;top:29.60px;font-size:8.5px;font-weight:bold;color:#333">M</div>
<div class="ab" style="left:113.07px;top:23.50px;width:1.00px;height:21.50px;background:#e0e0e0"></div>
<div class="t" style="left:113.07px;width:17.57px;text-align:center;top:29.60px;font-size:8.5px;font-weight:bold;color:#333">T</div>
<div class="ab" style="left:130.64px;top:23.50px;width:1.00px;height:21.50px;background:#e0e0e0"></div>
<div class="t" style="left:130.64px;width:17.57px;text-align:center;top:29.60px;font-size:8.5px;font-weight:bold;color:#333">W</div>
<div class="ab" style="left:148.21px;top:23.50px;width:1.00px;height:21.50px;background:#e0e0e0"></div>
<div class="t" style="left:148.21px;width:17.57px;text-align:center;top:29.60px;font-size:8.5px;font-weight:bold;color:#333">T</div>
<div class="ab" style="left:165.79px;top:23.50px;width:1.00px;height:21.50px;background:#e0e0e0"></div>
<div class="t" style="left:165.79px;width:17.57px;text-align:center;top:29.60px;font-size:8.5px;font-weight:bold;color:#333">F</div>
<div class="ab" style="left:183.36px;top:23.50px;width:1.00px;height:21.50px;background:#e0e0e0"></div>
<div class="t" style="left:183.36px;width:17.57px;text-align:center;top:29.60px;font-size:8.5px;font-weight:bold;color:#999">S</div>
<div class="ab" style="left:200.93px;top:23.50px;width:1.00px;height:21.50px;background:#e0e0e0"></div>
<div class="t" style="left:200.93px;width:17.57px;text-align:center;top:29.60px;font-size:8.5px;font-weight:bold;color:#999">S</div>
<div class="ab" style="left:307.07px;top:23.50px;width:35.43px;height:21.50px;background:#e9e9e9"></div>
<div class="ab" style="left:307.07px;top:46.00px;width:35.43px;height:405.50px;background:#f8f8f8"></div>
<div class="ab" style="left:218.50px;top:1.00px;width:1.00px;height:46.00px;background:#dcdcdc"></div>
<div class="ab" style="left:218.50px;top:46.00px;width:1.00px;height:405.50px;background:#e2e2e2"></div>
<div class="t" style="left:223.50px;top:6.78px;font-size:10.3px;font-weight:bold;color:#333;transform:scaleX(0.92);transform-origin:0 0">Mon 14 Mar 2022</div>
<div class="t" style="left:218.50px;width:17.71px;text-align:center;top:29.60px;font-size:8.5px;font-weight:bold;color:#333">M</div>
<div class="ab" style="left:236.21px;top:23.50px;width:1.00px;height:21.50px;background:#e0e0e0"></div>
<div class="t" style="left:236.21px;width:17.71px;text-align:center;top:29.60px;font-size:8.5px;font-weight:bold;color:#333">T</div>
<div class="ab" style="left:253.93px;top:23.50px;width:1.00px;height:21.50px;background:#e0e0e0"></div>
<div class="t" style="left:253.93px;width:17.71px;text-align:center;top:29.60px;font-size:8.5px;font-weight:bold;color:#333">W</div>
<div class="ab" style="left:271.64px;top:23.50px;width:1.00px;height:21.50px;background:#e0e0e0"></div>
<div class="t" style="left:271.64px;width:17.71px;text-align:center;top:29.60px;font-size:8.5px;font-weight:bold;color:#333">T</div>
<div class="ab" style="left:289.36px;top:23.50px;width:1.00px;height:21.50px;background:#e0e0e0"></div>
<div class="t" style="left:289.36px;width:17.71px;text-align:center;top:29.60px;font-size:8.5px;font-weight:bold;color:#333">F</div>
<div class="ab" style="left:307.07px;top:23.50px;width:1.00px;height:21.50px;background:#e0e0e0"></div>
<div class="t" style="left:307.07px;width:17.71px;text-align:center;top:29.60px;font-size:8.5px;font-weight:bold;color:#999">S</div>
<div class="ab" style="left:324.79px;top:23.50px;width:1.00px;height:21.50px;background:#e0e0e0"></div>
<div class="t" style="left:324.79px;width:17.71px;text-align:center;top:29.60px;font-size:8.5px;font-weight:bold;color:#999">S</div>
<div class="ab" style="left:430.36px;top:23.50px;width:35.14px;height:21.50px;background:#e9e9e9"></div>
<div class="ab" style="left:430.36px;top:46.00px;width:35.14px;height:405.50px;background:#f8f8f8"></div>
<div class="ab" style="left:342.50px;top:1.00px;width:1.00px;height:46.00px;background:#dcdcdc"></div>
<div class="ab" style="left:342.50px;top:46.00px;width:1.00px;height:405.50px;background:#e2e2e2"></div>
<div class="t" style="left:347.50px;top:6.78px;font-size:10.3px;font-weight:bold;color:#333;transform:scaleX(0.92);transform-origin:0 0">Mon 21 Mar 2022</div>
<div class="t" style="left:342.50px;width:17.57px;text-align:center;top:29.60px;font-size:8.5px;font-weight:bold;color:#333">M</div>
<div class="ab" style="left:360.07px;top:23.50px;width:1.00px;height:21.50px;background:#e0e0e0"></div>
<div class="t" style="left:360.07px;width:17.57px;text-align:center;top:29.60px;font-size:8.5px;font-weight:bold;color:#333">T</div>
<div class="ab" style="left:377.64px;top:23.50px;width:1.00px;height:21.50px;background:#e0e0e0"></div>
<div class="t" style="left:377.64px;width:17.57px;text-align:center;top:29.60px;font-size:8.5px;font-weight:bold;color:#333">W</div>
<div class="ab" style="left:395.21px;top:23.50px;width:1.00px;height:21.50px;background:#e0e0e0"></div>
<div class="t" style="left:395.21px;width:17.57px;text-align:center;top:29.60px;font-size:8.5px;font-weight:bold;color:#333">T</div>
<div class="ab" style="left:412.79px;top:23.50px;width:1.00px;height:21.50px;background:#e0e0e0"></div>
<div class="t" style="left:412.79px;width:17.57px;text-align:center;top:29.60px;font-size:8.5px;font-weight:bold;color:#333">F</div>
<div class="ab" style="left:430.36px;top:23.50px;width:1.00px;height:21.50px;background:#e0e0e0"></div>
<div class="t" style="left:430.36px;width:17.57px;text-align:center;top:29.60px;font-size:8.5px;font-weight:bold;color:#999">S</div>
<div class="ab" style="left:447.93px;top:23.50px;width:1.00px;height:21.50px;background:#e0e0e0"></div>
<div class="t" style="left:447.93px;width:17.57px;text-align:center;top:29.60px;font-size:8.5px;font-weight:bold;color:#999">S</div>
<div class="ab" style="left:554.07px;top:23.50px;width:35.43px;height:21.50px;background:#e9e9e9"></div>
<div class="ab" style="left:554.07px;top:46.00px;width:35.43px;height:405.50px;background:#f8f8f8"></div>
<div class="ab" style="left:465.50px;top:1.00px;width:1.00px;height:46.00px;background:#dcdcdc"></div>
<div class="ab" style="left:465.50px;top:46.00px;width:1.00px;height:405.50px;background:#e2e2e2"></div>
<div class="t" style="left:470.50px;top:6.78px;font-size:10.3px;font-weight:bold;color:#333;transform:scaleX(0.92);transform-origin:0 0">Mon 28 Mar 2022</div>
<div class="t" style="left:465.50px;width:17.71px;text-align:center;top:29.60px;font-size:8.5px;font-weight:bold;color:#333">M</div>
<div class="ab" style="left:483.21px;top:23.50px;width:1.00px;height:21.50px;background:#e0e0e0"></div>
<div class="t" style="left:483.21px;width:17.71px;text-align:center;top:29.60px;font-size:8.5px;font-weight:bold;color:#333">T</div>
<div class="ab" style="left:500.93px;top:23.50px;width:1.00px;height:21.50px;background:#e0e0e0"></div>
<div class="t" style="left:500.93px;width:17.71px;text-align:center;top:29.60px;font-size:8.5px;font-weight:bold;color:#333">W</div>
<div class="ab" style="left:518.64px;top:23.50px;width:1.00px;height:21.50px;background:#e0e0e0"></div>
<div class="t" style="left:518.64px;width:17.71px;text-align:center;top:29.60px;font-size:8.5px;font-weight:bold;color:#333">T</div>
<div class="ab" style="left:536.36px;top:23.50px;width:1.00px;height:21.50px;background:#e0e0e0"></div>
<div class="t" style="left:536.36px;width:17.71px;text-align:center;top:29.60px;font-size:8.5px;font-weight:bold;color:#333">F</div>
<div class="ab" style="left:554.07px;top:23.50px;width:1.00px;height:21.50px;background:#e0e0e0"></div>
<div class="t" style="left:554.07px;width:17.71px;text-align:center;top:29.60px;font-size:8.5px;font-weight:bold;color:#999">S</div>
<div class="ab" style="left:571.79px;top:23.50px;width:1.00px;height:21.50px;background:#e0e0e0"></div>
<div class="t" style="left:571.79px;width:17.71px;text-align:center;top:29.60px;font-size:8.5px;font-weight:bold;color:#999">S</div>
<div class="ab" style="left:677.36px;top:23.50px;width:35.14px;height:21.50px;background:#e9e9e9"></div>
<div class="ab" style="left:677.36px;top:46.00px;width:35.14px;height:405.50px;background:#f8f8f8"></div>
<div class="ab" style="left:589.50px;top:1.00px;width:1.00px;height:46.00px;background:#dcdcdc"></div>
<div class="ab" style="left:589.50px;top:46.00px;width:1.00px;height:405.50px;background:#e2e2e2"></div>
<div class="t" style="left:594.50px;top:6.78px;font-size:10.3px;font-weight:bold;color:#333;transform:scaleX(0.92);transform-origin:0 0">Mon 04 Apr 2022</div>
<div class="t" style="left:589.50px;width:17.57px;text-align:center;top:29.60px;font-size:8.5px;font-weight:bold;color:#333">M</div>
<div class="ab" style="left:607.07px;top:23.50px;width:1.00px;height:21.50px;background:#e0e0e0"></div>
<div class="t" style="left:607.07px;width:17.57px;text-align:center;top:29.60px;font-size:8.5px;font-weight:bold;color:#333">T</div>
<div class="ab" style="left:624.64px;top:23.50px;width:1.00px;height:21.50px;background:#e0e0e0"></div>
<div class="t" style="left:624.64px;width:17.57px;text-align:center;top:29.60px;font-size:8.5px;font-weight:bold;color:#333">W</div>
<div class="ab" style="left:642.21px;top:23.50px;width:1.00px;height:21.50px;background:#e0e0e0"></div>
<div class="t" style="left:642.21px;width:17.57px;text-align:center;top:29.60px;font-size:8.5px;font-weight:bold;color:#333">T</div>
<div class="ab" style="left:659.79px;top:23.50px;width:1.00px;height:21.50px;background:#e0e0e0"></div>
<div class="t" style="left:659.79px;width:17.57px;text-align:center;top:29.60px;font-size:8.5px;font-weight:bold;color:#333">F</div>
<div class="ab" style="left:677.36px;top:23.50px;width:1.00px;height:21.50px;background:#e0e0e0"></div>
<div class="t" style="left:677.36px;width:17.57px;text-align:center;top:29.60px;font-size:8.5px;font-weight:bold;color:#999">S</div>
<div class="ab" style="left:694.93px;top:23.50px;width:1.00px;height:21.50px;background:#e0e0e0"></div>
<div class="t" style="left:694.93px;width:17.57px;text-align:center;top:29.60px;font-size:8.5px;font-weight:bold;color:#999">S</div>
<div class="ab" style="left:800.36px;top:23.50px;width:35.14px;height:21.50px;background:#e9e9e9"></div>
<div class="ab" style="left:800.36px;top:46.00px;width:35.14px;height:405.50px;background:#f8f8f8"></div>
<div class="ab" style="left:712.50px;top:1.00px;width:1.00px;height:46.00px;background:#dcdcdc"></div>
<div class="ab" style="left:712.50px;top:46.00px;width:1.00px;height:405.50px;background:#e2e2e2"></div>
<div class="t" style="left:717.50px;top:6.78px;font-size:10.3px;font-weight:bold;color:#333;transform:scaleX(0.92);transform-origin:0 0">Mon 11 Apr 2022</div>
<div class="t" style="left:712.50px;width:17.57px;text-align:center;top:29.60px;font-size:8.5px;font-weight:bold;color:#333">M</div>
<div class="ab" style="left:730.07px;top:23.50px;width:1.00px;height:21.50px;background:#e0e0e0"></div>
<div class="t" style="left:730.07px;width:17.57px;text-align:center;top:29.60px;font-size:8.5px;font-weight:bold;color:#333">T</div>
<div class="ab" style="left:747.64px;top:23.50px;width:1.00px;height:21.50px;background:#e0e0e0"></div>
<div class="t" style="left:747.64px;width:17.57px;text-align:center;top:29.60px;font-size:8.5px;font-weight:bold;color:#333">W</div>
<div class="ab" style="left:765.21px;top:23.50px;width:1.00px;height:21.50px;background:#e0e0e0"></div>
<div class="t" style="left:765.21px;width:17.57px;text-align:center;top:29.60px;font-size:8.5px;font-weight:bold;color:#333">T</div>
<div class="ab" style="left:782.79px;top:23.50px;width:1.00px;height:21.50px;background:#e0e0e0"></div>
<div class="t" style="left:782.79px;width:17.57px;text-align:center;top:29.60px;font-size:8.5px;font-weight:bold;color:#333">F</div>
<div class="ab" style="left:800.36px;top:23.50px;width:1.00px;height:21.50px;background:#e0e0e0"></div>
<div class="t" style="left:800.36px;width:17.57px;text-align:center;top:29.60px;font-size:8.5px;font-weight:bold;color:#999">S</div>
<div class="ab" style="left:817.93px;top:23.50px;width:1.00px;height:21.50px;background:#e0e0e0"></div>
<div class="t" style="left:817.93px;width:17.57px;text-align:center;top:29.60px;font-size:8.5px;font-weight:bold;color:#999">S</div>
<div class="ab" style="left:0.00px;top:71.50px;width:810.50px;height:1.00px;background:#efefef"></div>
<div class="ab" style="left:0.00px;top:96.83px;width:810.50px;height:1.00px;background:#efefef"></div>
<div class="ab" style="left:0.00px;top:122.17px;width:810.50px;height:1.00px;background:#efefef"></div>
<div class="ab" style="left:0.00px;top:147.50px;width:810.50px;height:1.00px;background:#efefef"></div>
<div class="ab" style="left:0.00px;top:172.83px;width:810.50px;height:1.00px;background:#efefef"></div>
<div class="ab" style="left:0.00px;top:198.17px;width:810.50px;height:1.00px;background:#efefef"></div>
<div class="ab" style="left:0.00px;top:223.50px;width:810.50px;height:1.00px;background:#efefef"></div>
<div class="ab" style="left:0.00px;top:248.83px;width:810.50px;height:1.00px;background:#efefef"></div>
<div class="ab" style="left:0.00px;top:274.17px;width:810.50px;height:1.00px;background:#efefef"></div>
<div class="ab" style="left:0.00px;top:299.50px;width:810.50px;height:1.00px;background:#efefef"></div>
<div class="ab" style="left:0.00px;top:324.83px;width:810.50px;height:1.00px;background:#efefef"></div>
<div class="ab" style="left:0.00px;top:350.17px;width:810.50px;height:1.00px;background:#efefef"></div>
<div class="ab" style="left:0.00px;top:375.50px;width:810.50px;height:1.00px;background:#efefef"></div>
<div class="ab" style="left:0.00px;top:400.83px;width:810.50px;height:1.00px;background:#efefef"></div>
<div class="ab" style="left:0.00px;top:426.17px;width:810.50px;height:1.00px;background:#efefef"></div>
<div class="ab" style="left:0.00px;top:451.50px;width:810.50px;height:1.00px;background:#efefef"></div>
<div class="ab" style="left:137.50px;top:50.80px;width:658.00px;height:9.50px;background:#b7b8ba"></div>
<svg class="ab" style="left:137.50px;top:60.30px" width="6" height="6" viewBox="0 0 6 6"><path d="M0 0 H5.5 L0 5.5 Z" fill="#b7b8ba"/></svg>
<svg class="ab" style="left:789.50px;top:60.30px" width="6" height="6" viewBox="0 0 6 6"><path d="M0.5 0 H6 V5.5 Z" fill="#b7b8ba"/></svg>
<div class="ab" style="left:137.50px;top:50.80px;width:52.70px;height:9.50px;background:#e1e2e3;border:1px solid #cfd0d2;border-right:none"></div>
<div class="t" style="left:137.50px;width:50.70px;text-align:right;top:52.30px;font-size:8px;color:#111">8.2%</div>
<div class="ab" style="left:137.50px;top:76.50px;width:517.00px;height:9.50px;background:#b7b8ba"></div>
<svg class="ab" style="left:137.50px;top:86.00px" width="6" height="6" viewBox="0 0 6 6"><path d="M0 0 H5.5 L0 5.5 Z" fill="#b7b8ba"/></svg>
<svg class="ab" style="left:648.50px;top:86.00px" width="6" height="6" viewBox="0 0 6 6"><path d="M0.5 0 H6 V5.5 Z" fill="#b7b8ba"/></svg>
<div class="ab" style="left:137.50px;top:101.50px;width:464.00px;height:16.50px;background:#42a0d8"></div>
<div class="ab" style="left:140.50px;top:104.00px;width:17.00px;height:12.00px;background:#78bcec;border-radius:1.5px"></div>
<div class="t" style="left:142.80px;top:106.60px;font-size:9.8px;color:#fff;font-weight:bold;transform:scaleX(0.86);transform-origin:0 0">0%</div>
<div class="ab" style="left:612.70px;top:126.80px;width:19.80px;height:16.50px;background:#42a0d8"></div>
<div class="ab" style="left:614.50px;top:129.30px;width:17.00px;height:12.00px;background:#78bcec;border-radius:1.5px"></div>
<div class="t" style="left:616.80px;top:131.90px;font-size:9.8px;color:#fff;font-weight:bold;transform:scaleX(0.86);transform-origin:0 0">0%</div>
<div class="ab" style="left:612.70px;top:152.50px;width:41.80px;height:16.50px;background:#42a0d8"></div>
<div class="ab" style="left:614.50px;top:155.00px;width:17.00px;height:12.00px;background:#78bcec;border-radius:1.5px"></div>
<div class="t" style="left:616.80px;top:157.60px;font-size:9.8px;color:#fff;font-weight:bold;transform:scaleX(0.86);transform-origin:0 0">0%</div>
<div class="ab" style="left:260.50px;top:177.70px;width:130.00px;height:9.50px;background:#b7b8ba"></div>
<svg class="ab" style="left:260.50px;top:187.20px" width="6" height="6" viewBox="0 0 6 6"><path d="M0 0 H5.5 L0 5.5 Z" fill="#b7b8ba"/></svg>
<svg class="ab" style="left:384.50px;top:187.20px" width="6" height="6" viewBox="0 0 6 6"><path d="M0.5 0 H6 V5.5 Z" fill="#b7b8ba"/></svg>
<div class="ab" style="left:260.50px;top:203.10px;width:94.50px;height:16.50px;background:#42a0d8"></div>
<div class="ab" style="left:263.50px;top:205.60px;width:17.00px;height:12.00px;background:#78bcec;border-radius:1.5px"></div>
<div class="t" style="left:265.80px;top:208.20px;font-size:9.8px;color:#fff;font-weight:bold;transform:scaleX(0.86);transform-origin:0 0">0%</div>
<div class="ab" style="left:295.50px;top:228.50px;width:95.00px;height:16.50px;background:#42a0d8"></div>
<div class="ab" style="left:298.50px;top:231.00px;width:17.00px;height:12.00px;background:#78bcec;border-radius:1.5px"></div>
<div class="t" style="left:300.80px;top:233.60px;font-size:9.8px;color:#fff;font-weight:bold;transform:scaleX(0.86);transform-origin:0 0">0%</div>
<div class="ab" style="left:137.50px;top:253.90px;width:658.00px;height:9.50px;background:#b7b8ba"></div>
<svg class="ab" style="left:137.50px;top:263.40px" width="6" height="6" viewBox="0 0 6 6"><path d="M0 0 H5.5 L0 5.5 Z" fill="#b7b8ba"/></svg>
<svg class="ab" style="left:789.50px;top:263.40px" width="6" height="6" viewBox="0 0 6 6"><path d="M0.5 0 H6 V5.5 Z" fill="#b7b8ba"/></svg>
<div class="ab" style="left:137.50px;top:253.90px;width:120.00px;height:9.50px;background:#e1e2e3;border:1px solid #cfd0d2;border-right:none"></div>
<div class="t" style="left:137.50px;width:118.00px;text-align:right;top:255.40px;font-size:8px;color:#111">18.37%</div>
<div class="ab" style="left:401.80px;top:278.90px;width:23.40px;height:16.50px;background:#42a0d8"></div>
<div class="ab" style="left:401.80px;top:278.90px;width:21.70px;height:16.50px;background:#6fb8ea"></div>
<div class="ab" style="left:403.50px;top:281.40px;width:20.00px;height:12.00px;background:#78bcec;border-radius:1.5px"></div>
<div class="t" style="left:405.80px;top:284.00px;font-size:9.8px;color:#fff;font-weight:bold;transform:scaleX(0.86);transform-origin:0 0">93%</div>
<div class="ab" style="left:471.50px;top:304.60px;width:60.00px;height:16.50px;background:#42a0d8"></div>
<div class="ab" style="left:471.50px;top:304.60px;width:24.00px;height:16.50px;background:#6fb8ea"></div>
<div class="ab" style="left:473.50px;top:307.10px;width:20.00px;height:12.00px;background:#78bcec;border-radius:1.5px"></div>
<div class="t" style="left:475.80px;top:309.70px;font-size:9.8px;color:#fff;font-weight:bold;transform:scaleX(0.86);transform-origin:0 0">40%</div>
<div class="ab" style="left:507.10px;top:329.50px;width:288.40px;height:9.50px;background:#b7b8ba"></div>
<svg class="ab" style="left:507.10px;top:339.00px" width="6" height="6" viewBox="0 0 6 6"><path d="M0 0 H5.5 L0 5.5 Z" fill="#b7b8ba"/></svg>
<svg class="ab" style="left:789.50px;top:339.00px" width="6" height="6" viewBox="0 0 6 6"><path d="M0.5 0 H6 V5.5 Z" fill="#b7b8ba"/></svg>
<div class="ab" style="left:507.10px;top:329.50px;width:23.10px;height:9.50px;background:#e1e2e3;border:1px solid #cfd0d2;border-right:none"></div>
<div class="t" style="left:507.10px;width:21.10px;text-align:right;top:331.00px;font-size:8px;color:#111">8.33%</div>
<div class="ab" style="left:137.50px;top:355.00px;width:218.00px;height:9.50px;background:#b7b8ba"></div>
<svg class="ab" style="left:137.50px;top:364.50px" width="6" height="6" viewBox="0 0 6 6"><path d="M0 0 H5.5 L0 5.5 Z" fill="#b7b8ba"/></svg>
<svg class="ab" style="left:349.50px;top:364.50px" width="6" height="6" viewBox="0 0 6 6"><path d="M0.5 0 H6 V5.5 Z" fill="#b7b8ba"/></svg>
<div class="ab" style="left:137.50px;top:380.50px;width:6.00px;height:16.50px;background:#2f8fd0"></div>
<div class="ab" style="left:141.00px;top:383.00px;width:16.00px;height:12.00px;background:#78bcec;border-radius:1.5px"></div>
<div class="t" style="left:143.30px;top:385.60px;font-size:9.8px;color:#fff;font-weight:bold;transform:scaleX(0.86);transform-origin:0 0">0%</div>
<div class="ab" style="left:137.50px;top:406.00px;width:6.00px;height:16.50px;background:#2f8fd0"></div>
<div class="ab" style="left:141.00px;top:408.50px;width:16.00px;height:12.00px;background:#78bcec;border-radius:1.5px"></div>
<div class="t" style="left:143.30px;top:411.10px;font-size:9.8px;color:#fff;font-weight:bold;transform:scaleX(0.86);transform-origin:0 0">0%</div>
<svg class="ab" style="left:129.00px;top:431.00px" width="17" height="17" viewBox="0 0 17 17"><path d="M8.5 0.5 L16.5 8.5 L8.5 16.5 L0.5 8.5 Z" fill="#42a0d8"/></svg>
<div class="ab" style="left:601.50px;top:109.50px;width:15.50px;height:1.00px;background:#5a9fd8"></div>
<div class="ab" style="left:616.50px;top:109.50px;width:1.00px;height:12.00px;background:#5a9fd8"></div>
<svg class="ab" style="left:613.50px;top:121.80px" width="7" height="5" viewBox="0 0 7 5"><path d="M0 0 H7 L3.5 5 Z" fill="#5a9fd8"/></svg>
<div class="ab" style="left:616.50px;top:143.50px;width:1.00px;height:4.00px;background:#5a9fd8"></div>
<svg class="ab" style="left:613.50px;top:147.50px" width="7" height="5" viewBox="0 0 7 5"><path d="M0 0 H7 L3.5 5 Z" fill="#5a9fd8"/></svg>
<div class="ab" style="left:390.50px;top:236.50px;width:15.00px;height:1.00px;background:#5a9fd8"></div>
<div class="ab" style="left:405.50px;top:236.50px;width:1.00px;height:37.00px;background:#5a9fd8"></div>
<svg class="ab" style="left:402.50px;top:273.90px" width="7" height="5" viewBox="0 0 7 5"><path d="M0 0 H7 L3.5 5 Z" fill="#5a9fd8"/></svg>
<div class="ab" style="left:425.20px;top:287.50px;width:50.80px;height:1.00px;background:#5a9fd8"></div>
<div class="ab" style="left:476.00px;top:287.50px;width:1.00px;height:12.00px;background:#5a9fd8"></div>
<svg class="ab" style="left:473.00px;top:299.50px" width="7" height="5" viewBox="0 0 7 5"><path d="M0 0 H7 L3.5 5 Z" fill="#5a9fd8"/></svg>
<div class="t" style="left:667.90px;top:76.36px;padding:2px 2px;background:#fff;font-size:10.2px;font-weight:bold;color:#9a9a9a;line-height:1;transform:scaleX(0.91);transform-origin:0 0">T-0000132</div>
<div class="t" style="left:625.80px;top:101.69px;padding:2px 2px;background:#fff;font-size:10.2px;font-weight:bold;color:#9a9a9a;line-height:1;transform:scaleX(0.91);transform-origin:0 0">T-0000138</div>
<div class="t" style="left:657.30px;top:127.02px;padding:2px 2px;background:#fff;font-size:10.2px;font-weight:bold;color:#9a9a9a;line-height:1;transform:scaleX(0.91);transform-origin:0 0">T-0000139</div>
<div class="t" style="left:678.90px;top:152.35px;padding:2px 2px;background:#fff;font-size:10.2px;font-weight:bold;color:#9a9a9a;line-height:1;transform:scaleX(0.91);transform-origin:0 0">T-0000140</div>
<div class="t" style="left:403.50px;top:177.68px;padding:2px 2px;background:#fff;font-size:10.2px;font-weight:bold;color:#9a9a9a;line-height:1;transform:scaleX(0.91);transform-origin:0 0">T-0000133</div>
<div class="t" style="left:379.50px;top:203.01px;padding:2px 2px;background:#fff;font-size:10.2px;font-weight:bold;color:#9a9a9a;line-height:1;transform:scaleX(0.91);transform-origin:0 0">T-0000141</div>
<div class="t" style="left:414.50px;top:228.34px;padding:2px 2px;background:#fff;font-size:10.2px;font-weight:bold;color:#9a9a9a;line-height:1;transform:scaleX(0.91);transform-origin:0 0">T-0000142</div>
<div class="t" style="left:449.50px;top:279.00px;padding:2px 2px;background:#fff;font-size:10.2px;font-weight:bold;color:#9a9a9a;line-height:1;transform:scaleX(0.91);transform-origin:0 0">T-0000143</div>
<div class="t" style="left:555.50px;top:304.33px;padding:2px 2px;background:#fff;font-size:10.2px;font-weight:bold;color:#9a9a9a;line-height:1;transform:scaleX(0.91);transform-origin:0 0">T-0000144</div>
<div class="t" style="left:368.50px;top:354.99px;padding:2px 2px;background:#fff;font-size:10.2px;font-weight:bold;color:#9a9a9a;line-height:1;transform:scaleX(0.91);transform-origin:0 0">&#352;tampanje prototipa</div>
<div class="t" style="left:168.50px;top:380.32px;padding:2px 2px;background:#fff;font-size:10.2px;font-weight:bold;color:#9a9a9a;line-height:1;transform:scaleX(0.91);transform-origin:0 0">T-0000135</div>
<div class="t" style="left:168.50px;top:405.65px;padding:2px 2px;background:#fff;font-size:10.2px;font-weight:bold;color:#9a9a9a;line-height:1;transform:scaleX(0.91);transform-origin:0 0">T-0000136</div>
<div class="t" style="left:178.30px;top:430.98px;padding:2px 2px;background:#fff;font-size:10.2px;font-weight:bold;color:#9a9a9a;line-height:1;transform:scaleX(0.91);transform-origin:0 0">odluka</div>
<div class="t" style="left:808.00px;top:253.67px;padding:2px 2px;background:#fff;font-size:10.2px;font-weight:bold;color:#9a9a9a;line-height:1;transform:scaleX(0.91);transform-origin:0 0">T-0000134</div>
<div class="t" style="left:808.00px;top:329.66px;padding:2px 2px;background:#fff;font-size:10.2px;font-weight:bold;color:#9a9a9a;line-height:1;transform:scaleX(0.91);transform-origin:0 0">T-0000145</div>
</div>
<div class="ab" style="left:230px;top:674px;width:234px;height:13px;background:#f1f1f1"></div>
<svg class="ab" style="left:234px;top:677px" width="6" height="8" viewBox="0 0 6 8"><path d="M5 0.5 V7.5 L1 4 Z" fill="#bbb"/></svg>
<div class="ab" style="left:243.5px;top:675.5px;width:40px;height:10px;background:#c1c1c1"></div>
<svg class="ab" style="left:455.5px;top:677px" width="6" height="8" viewBox="0 0 6 8"><path d="M1 0.5 V7.5 L5 4 Z" fill="#444"/></svg>
<div class="ab" style="left:470px;top:674px;width:810px;height:13px;background:#f1f1f1"></div>
<svg class="ab" style="left:472.5px;top:677px" width="6" height="8" viewBox="0 0 6 8"><path d="M5 0.5 V7.5 L1 4 Z" fill="#444"/></svg>
<div class="ab" style="left:506px;top:675.5px;width:774px;height:10px;background:#c1c1c1"></div>
<div class="ab" style="left:229px;top:686.5px;width:1051px;height:1.5px;background:#bdbdbd"></div>
<div class="ab" style="left:230px;top:688px;width:1050px;height:27px;background:#fff;border-left:1px solid #ccc"></div>
<div class="ab" style="left:229px;top:714.5px;width:1051px;height:1.5px;background:#bdbdbd"></div>
<div class="ab" style="left:229px;top:716px;width:1051px;height:4px;background:#e6e8ef"></div>
</body></html>
